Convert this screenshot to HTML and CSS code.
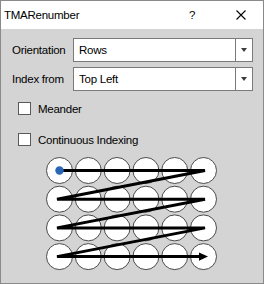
FILE: index.html
```html
<!DOCTYPE html>
<html lang="en">

<head>
    <meta charset="UTF-8">
    <title>TMARenumber</title>
    <link rel="stylesheet" href="styles.css">
</head>

<body>
    <div class="window">
        <div class="titlebar">
            <span class="title">TMARenumber</span>
            <span class="help">?</span>
            <span class="close">
                <svg width="10" height="10" viewBox="0 0 10 10">
                    <path d="M0.5 0.5 L9.5 9.5 M9.5 0.5 L0.5 9.5" stroke="#000" stroke-width="1.1" fill="none" />
                </svg>
            </span>
        </div>
        <div class="content">
            <div class="form-row">
                <span class="field-label">Orientation</span>
                <div class="combo">
                    <span class="combo-text">Rows</span>
                    <span class="combo-btn"><span class="arrow"></span></span>
                </div>
            </div>
            <div class="form-row">
                <span class="field-label">Index from</span>
                <div class="combo">
                    <span class="combo-text">Top Left</span>
                    <span class="combo-btn"><span class="arrow"></span></span>
                </div>
            </div>
            <div class="check-row first">
                <span class="checkbox"></span>
                <span class="check-label">Meander</span>
            </div>
            <div class="check-row">
                <span class="checkbox"></span>
                <span class="check-label">Continuous Indexing</span>
            </div>
            <svg class="grid" width="180" height="126" viewBox="0 0 180 126">
                <g fill="#fff" stroke="#4a4a4a" stroke-width="1">
                    <circle cx="19.5" cy="20.5" r="13" />
                    <circle cx="48.3" cy="20.5" r="13" />
                    <circle cx="77.1" cy="20.5" r="13" />
                    <circle cx="105.9" cy="20.5" r="13" />
                    <circle cx="134.7" cy="20.5" r="13" />
                    <circle cx="163.5" cy="20.5" r="13" />
                    <circle cx="19.5" cy="49.2" r="13" />
                    <circle cx="48.3" cy="49.2" r="13" />
                    <circle cx="77.1" cy="49.2" r="13" />
                    <circle cx="105.9" cy="49.2" r="13" />
                    <circle cx="134.7" cy="49.2" r="13" />
                    <circle cx="163.5" cy="49.2" r="13" />
                    <circle cx="19.5" cy="77.9" r="13" />
                    <circle cx="48.3" cy="77.9" r="13" />
                    <circle cx="77.1" cy="77.9" r="13" />
                    <circle cx="105.9" cy="77.9" r="13" />
                    <circle cx="134.7" cy="77.9" r="13" />
                    <circle cx="163.5" cy="77.9" r="13" />
                    <circle cx="19.5" cy="106.6" r="13" />
                    <circle cx="48.3" cy="106.6" r="13" />
                    <circle cx="77.1" cy="106.6" r="13" />
                    <circle cx="105.9" cy="106.6" r="13" />
                    <circle cx="134.7" cy="106.6" r="13" />
                    <circle cx="163.5" cy="106.6" r="13" />
                </g>
                <polyline points="19,20.5 165,20.5 17,49.2 165,49.2 17,77.9 165,77.9 17,106.6 160,106.6"
                    fill="none" stroke="#000" stroke-width="3" stroke-linejoin="miter" />
                <path d="M159 102.4 L168 106.6 L159 110.8 Z" fill="#000" />
                <circle cx="19.5" cy="20.5" r="4.2" fill="#2a66b8" />
            </svg>
        </div>
    </div>
</body>

</html>
```

FILE: styles.css
```css
body {
    margin: 0;
    padding: 0;
    font-family: "Liberation Sans", Arial, sans-serif;
    font-size: 11.5px;
    letter-spacing: -0.25px;
    color: #000;
    background-color: #d4d4d4;
}

.window {
    width: 264px;
    height: 284px;
    box-sizing: border-box;
    border: 1px solid #8a8a8a;
    background-color: #d4d4d4;
    display: flex;
    flex-direction: column;
}

.titlebar {
    height: 28px;
    background-color: #fff;
    display: flex;
    align-items: center;
    padding-left: 3px;
    flex-shrink: 0;
}

.title {
    flex: 1;
}

.help {
    width: 6px;
    margin-right: 41px;
}

.close {
    display: flex;
    margin-right: 17px;
}

.content {
    padding: 9px 10px 0 11px;
    display: flex;
    flex-direction: column;
}

.form-row {
    display: flex;
    align-items: center;
    margin-bottom: 5px;
}

.field-label {
    width: 61px;
}

.combo {
    width: 180px;
    height: 24px;
    box-sizing: border-box;
    border: 1px solid #7a7a7a;
    background-color: #fff;
    display: flex;
}

.combo-text {
    flex: 1;
    display: flex;
    align-items: center;
    padding-left: 5px;
}

.combo-btn {
    width: 16px;
    border-left: 1px solid #7a7a7a;
    display: flex;
    align-items: center;
    justify-content: center;
}

.arrow {
    width: 0;
    height: 0;
    border-left: 3.5px solid transparent;
    border-right: 3.5px solid transparent;
    border-top: 4px solid #3c3c3c;
}

.check-row {
    display: flex;
    align-items: center;
    height: 13px;
    margin-left: 6px;
    margin-top: 18px;
}

.check-row.first {
    margin-top: 6px;
}

.checkbox {
    width: 13px;
    height: 13px;
    box-sizing: border-box;
    border: 1px solid #5a5a5a;
    background-color: #fff;
    margin-right: 7px;
}

.grid {
    display: block;
    margin-left: 28px;
    margin-top: 4px;
}
```
